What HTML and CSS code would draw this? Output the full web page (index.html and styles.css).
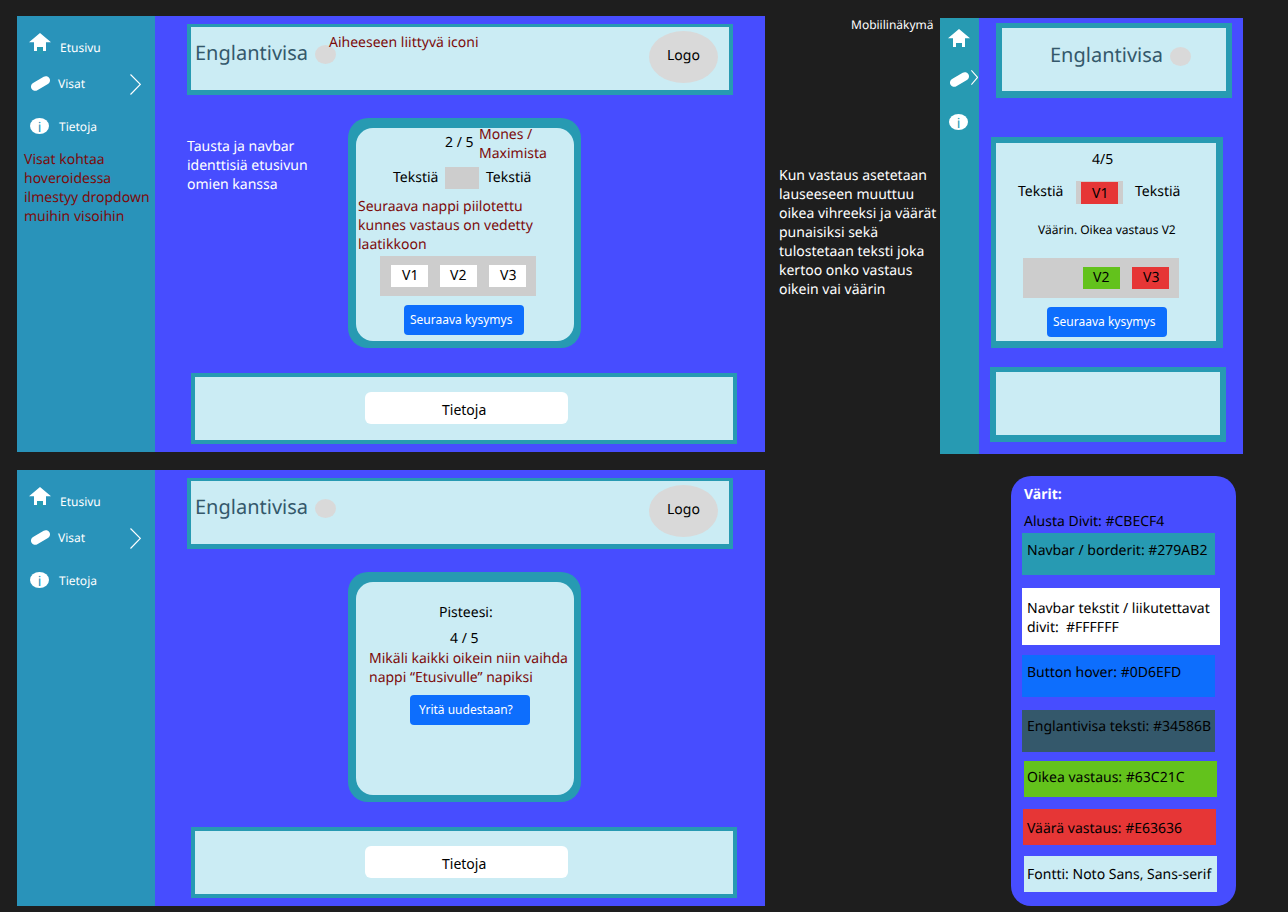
FILE: index.html
```html
<!DOCTYPE html>
<html lang="fi">
<head>
<meta charset="utf-8">
<title>Englantivisa</title>
<link rel="stylesheet" href="styles.css">
</head>
<body>
<svg class="defs" aria-hidden="true">
  <symbol id="home" viewBox="0 0 22 21"><path d="M11 0 22 9.3H17V18H14V14H8V18H5V9.3H0Z"/></symbol>
  <symbol id="pill" viewBox="0 0 20 15"><path d="M4.2 10.6 14.8 4.4" fill="none" stroke="#fff" stroke-width="8.4" stroke-linecap="round"/></symbol>
  <symbol id="arrow" viewBox="0 0 11 21" preserveAspectRatio="none"><path d="M.5.5 10.3 10.4.5 20.5" fill="none" stroke="#fff" stroke-width="1.15" vector-effect="non-scaling-stroke"/></symbol>
</svg>
<main class="board">

  <section class="frame desktop desktop-quiz">
    <nav class="sidebar">
      <a class="item home-item"><svg class="home"><use href="#home"/><rect class="door" x="8" y="14" width="6" height="7"/></svg><span>Etusivu</span></a>
      <a class="item quiz-item"><svg class="pill"><use href="#pill"/></svg><span>Visat</span><svg class="arrow"><use href="#arrow"/></svg></a>
      <a class="item info-item"><b class="info">i</b><span>Tietoja</span></a>
      <p class="side-note note">Visat kohtaa<br>hoveroidessa<br>ilmestyy dropdown<br>muihin visoihin</p>
    </nav>
    <div class="content">
      <header class="header"><h1>Englantivisa</h1><i class="dot"></i><div class="logo">Logo</div></header>
      <div class="card"><div class="card-body">
        <p class="count">2 / 5</p>
        <div class="sentence"><span>Tekstiä</span><i class="slot"></i><span>Tekstiä</span></div>
        <p class="note hint">Seuraava nappi piilotettu<br>kunnes vastaus on vedetty<br>laatikkoon</p>
        <div class="tray"><span class="chip">V1</span><span class="chip second">V2</span><span class="chip">V3</span></div>
        <button class="button">Seuraava kysymys</button>
      </div></div>
      <footer class="footer"><button class="about">Tietoja</button></footer>
    </div>
    <p class="callout icon-note note">Aiheeseen liittyvä iconi</p>
    <p class="callout count-note note">Mones /<br>Maximista</p>
    <p class="callout bg-note">Tausta ja navbar<br>identtisiä etusivun<br>omien kanssa</p>
  </section>

  <section class="frame desktop desktop-result">
    <nav class="sidebar">
      <a class="item home-item"><svg class="home"><use href="#home"/><rect class="door" x="8" y="14" width="6" height="7"/></svg><span>Etusivu</span></a>
      <a class="item quiz-item"><svg class="pill"><use href="#pill"/></svg><span>Visat</span><svg class="arrow"><use href="#arrow"/></svg></a>
      <a class="item info-item"><b class="info">i</b><span>Tietoja</span></a>
    </nav>
    <div class="content">
      <header class="header"><h1>Englantivisa</h1><i class="dot"></i><div class="logo">Logo</div></header>
      <div class="card"><div class="card-body result">
        <p class="points-title">Pisteesi:</p>
        <p class="points">4 / 5</p>
        <p class="note retry-note">Mikäli kaikki oikein niin vaihda<br>nappi “Etusivulle” napiksi</p>
        <button class="button retry">Yritä uudestaan?</button>
      </div></div>
      <footer class="footer"><button class="about">Tietoja</button></footer>
    </div>
  </section>

  <p class="callout mobile-label">Mobiilinäkymä</p>
  <p class="callout answer-note">Kun vastaus asetetaan<br>lauseeseen muuttuu<br>oikea vihreeksi ja väärät<br>punaisiksi sekä<br>tulostetaan teksti joka<br>kertoo onko vastaus<br>oikein vai väärin</p>

  <section class="frame mobile">
    <nav class="sidebar">
      <a class="item home-item"><svg class="home"><use href="#home"/></svg></a>
      <a class="item quiz-item"><svg class="pill"><use href="#pill"/></svg><svg class="arrow"><use href="#arrow"/></svg></a>
      <a class="item info-item"><b class="info">i</b></a>
    </nav>
    <div class="content">
      <header class="header"><h1>Englantivisa</h1><i class="dot"></i></header>
      <div class="card">
        <p class="count">4/5</p>
        <div class="sentence"><span>Tekstiä</span><div class="slot"><span class="chip wrong">V1</span></div><span>Tekstiä</span></div>
        <p class="verdict">Väärin. Oikea vastaus V2</p>
        <div class="tray"><span class="chip right second">V2</span><span class="chip wrong">V3</span></div>
        <button class="button">Seuraava kysymys</button>
      </div>
      <footer class="footer"></footer>
    </div>
  </section>

  <section class="palette">
    <h2>Värit:</h2>
    <p class="base">Alusta Divit: #CBECF4</p>
    <div class="swatch teal">Navbar / borderit: #279AB2</div>
    <div class="swatch white">Navbar tekstit / liikutettavat<br>divit:&nbsp; #FFFFFF</div>
    <div class="swatch blue">Button hover: #0D6EFD</div>
    <div class="swatch slate">Englantivisa teksti: #34586B</div>
    <div class="swatch green">Oikea vastaus: #63C21C</div>
    <div class="swatch red">Väärä vastaus: #E63636</div>
    <div class="swatch pale">Fontti: Noto Sans, Sans-serif</div>
  </section>
</main>
</body>
</html>
```
FILE: styles.css
```css
* { box-sizing: border-box; }
body { margin: 0; background: #1e1e1e; }
h1, h2, p { margin: 0; font-weight: 400; }
button { border: 0; padding: 0; font: inherit; text-align: left; }
svg { display: block; flex: none; overflow: visible; fill: #fff; }
.defs { position: absolute; width: 0; height: 0; }

.board {
  position: relative;
  width: 1288px;
  height: 912px;
  overflow: hidden;
  font: 14px/19px "Noto Sans", sans-serif;
  text-rendering: geometricPrecision;
  color: #000;
  white-space: nowrap;
}
.note { color: #7c0b0b; }

/* Frames on the canvas */
.frame { position: absolute; display: flex; background: #474dff; }
.desktop { left: 17px; width: 748px; height: 436px; }
.desktop-quiz { top: 16px; }
.desktop-result { top: 470px; }
.mobile { left: 940px; top: 18px; width: 303px; height: 436px; }

/* Annotations over the frames */
.callout { position: absolute; }
.icon-note { left: 312px; top: 17px; }
.count-note { left: 462px; top: 109px; }
.bg-note { left: 170px; top: 121px; color: #fff; }
.mobile-label { left: 851px; top: 16px; font-size: 12px; line-height: 18px; color: #fff; }
.answer-note { left: 779px; top: 166px; color: #fff; }

/* Navigation */
.sidebar { flex: none; width: 138px; padding: 17px 0 0 12px; background: #2993ba; }
.item { display: flex; align-items: flex-start; font-size: 12px; line-height: 18px; color: #fff; }
.home-item { height: 42px; }
.quiz-item { height: 43px; padding-left: 2px; }
.info-item { height: 32px; padding-left: 1px; }
.home { width: 22px; height: 21px; }
.home-item span { margin: 6px 0 0 9px; }
.door { fill: #279ab2; }
.pill { width: 20px; height: 15px; margin-top: 1px; }
.quiz-item span { width: 72px; margin-left: 7px; }
.arrow { width: 11px; height: 21px; margin-top: -1px; }
.info {
  width: 19px;
  height: 16px;
  border-radius: 50%;
  background: #fff;
  color: #2993ba;
  font-size: 14px;
  font-weight: 400;
  line-height: 19px;
  text-align: center;
}
.info-item span { margin-left: 10px; }
.side-note { margin-left: -5px; }

/* Desktop content */
.content { flex: 1; display: flex; flex-direction: column; align-items: flex-start; }
.desktop .content { padding: 8px 0 0 32px; }
.header {
  display: flex;
  width: 546px;
  height: 71px;
  border: solid #279ab2;
  border-width: 3px 4px 5px;
  background: #cbecf4;
  padding-left: 4px;
}
h1 { width: 120px; padding-top: 12px; font-size: 20px; line-height: 27px; color: #34586b; }
.dot { flex: none; width: 21px; height: 19px; margin-top: 18px; border-radius: 50%; background: #d9d9d9; }
.logo {
  width: 69px;
  height: 52px;
  margin: 4px 11px 0 auto;
  padding: 15px 0 0 18px;
  border-radius: 50%;
  background: #d9d9d9;
}
.card {
  width: 233px;
  height: 230px;
  margin: 23px 0 0 161px;
  padding: 10px 7px 7px 8px;
  border-radius: 20px;
  background: #279ab2;
}
.card-body { height: 213px; padding-top: 5px; border-radius: 17px; background: #cbecf4; }
.count { margin-left: 89px; }
.sentence { display: flex; margin: 15px 0 0 37px; }
.sentence > span { padding-top: 1px; }
.sentence > span:first-child { width: 52px; }
.slot { width: 34px; height: 22px; margin-right: 7px; background: #cdcdcd; }
.hint { margin: 8px 0 0 2px; }
.tray {
  display: flex;
  gap: 12px;
  width: 156px;
  height: 40px;
  margin: 2px 0 0 24px;
  padding: 9px 0 0 11px;
  background: #cdcdcd;
}
.chip { width: 37px; height: 22px; padding: 1px 0 0 11px; background: #fff; }
.second { padding-left: 10px; }
.button {
  display: block;
  width: 120px;
  height: 30px;
  margin: 9px 0 0 48px;
  padding: 0 0 0 6px;
  border-radius: 4px;
  background: #0d6efd;
  color: #fff;
  font-size: 12px;
  line-height: 18px;
}
.footer {
  width: 546px;
  height: 71px;
  margin: 25px 0 0 4px;
  padding: 15px 0 0 170px;
  border: 4px solid #279ab2;
  background: #cbecf4;
}
.about { display: block; width: 203px; height: 32px; padding: 3px 0 0 77px; border-radius: 6px; background: #fff; }

/* Result card */
.result { padding-top: 21px; }
.points-title { margin-left: 83px; }
.points { margin: 7px 0 0 94px; }
.retry-note { margin: 1px 0 0 13px; }
.retry { margin: 8px 0 0 54px; padding-left: 9px; }

/* Mobile view */
.mobile .sidebar { width: 39px; padding: 11px 0 0 8px; background: #279ab2; }
.mobile .info { color: #279ab2; }
.mobile .arrow { width: 7px; height: 15px; margin: -1px 0 0 1px; }
.mobile .content { padding: 5px 0 0 11px; }
.mobile .header { width: 236px; height: 75px; margin-left: 6px; padding-left: 48px; border-width: 5px 6px 7px; }
.mobile h1 { padding-top: 13px; }
.mobile .dot { margin-top: 19px; }
.mobile .card {
  width: 232px;
  height: 211px;
  margin: 39px 0 0 1px;
  padding: 7px 0 0;
  border: solid #279ab2;
  border-width: 6px 7px 7px 5px;
  border-radius: 0;
  background: #cbecf4;
}
.mobile .count { margin-left: 96px; }
.mobile .sentence { margin: 12px 0 0 22px; }
.mobile .sentence > span:first-child { width: 58px; }
.mobile .slot { width: 47px; height: 23px; margin-right: 12px; padding: 1px 0 0 5px; }
.mobile .slot .chip { display: block; padding-top: 2px; }
.verdict { margin: 17px 0 0 42px; font-size: 12px; line-height: 18px; }
.mobile .tray { margin: 19px 0 0 27px; padding-left: 60px; }
.mobile .button { margin-left: 51px; }
.mobile .footer { width: 236px; height: 75px; margin: 19px 0 0; padding: 0; border-width: 5px 6px 7px; }
.chip.right { background: #63c21c; }
.chip.wrong { background: #e63636; }

/* Colour palette */
.palette {
  position: absolute;
  left: 1011px;
  top: 476px;
  width: 225px;
  height: 430px;
  padding: 9px 0 0 11px;
  border-radius: 20px;
  background: #474dff;
}
h2 { margin-left: 2px; font-size: 14px; line-height: 19px; font-weight: 700; color: #fff; }
.base { margin: 8px 0 2px 2px; }
.swatch { width: 193px; height: 42px; margin-bottom: 13px; padding: 8px 0 0 5px; }
.teal { background: #279ab2; }
.white { width: 198px; height: 57px; margin-bottom: 10px; padding-top: 11px; background: #fff; }
.blue { background: #0d6efd; }
.slate { margin-bottom: 9px; padding-top: 7px; background: #34586b; }
.green { height: 36px; margin: 0 0 12px 2px; padding: 7px 0 0 3px; background: #63c21c; }
.red { height: 36px; margin: 0 0 11px 1px; padding: 10px 0 0 4px; background: #e63636; }
.pale { height: 36px; margin: 0 0 0 2px; padding: 9px 0 0 3px; background: #cbecf4; }
```
